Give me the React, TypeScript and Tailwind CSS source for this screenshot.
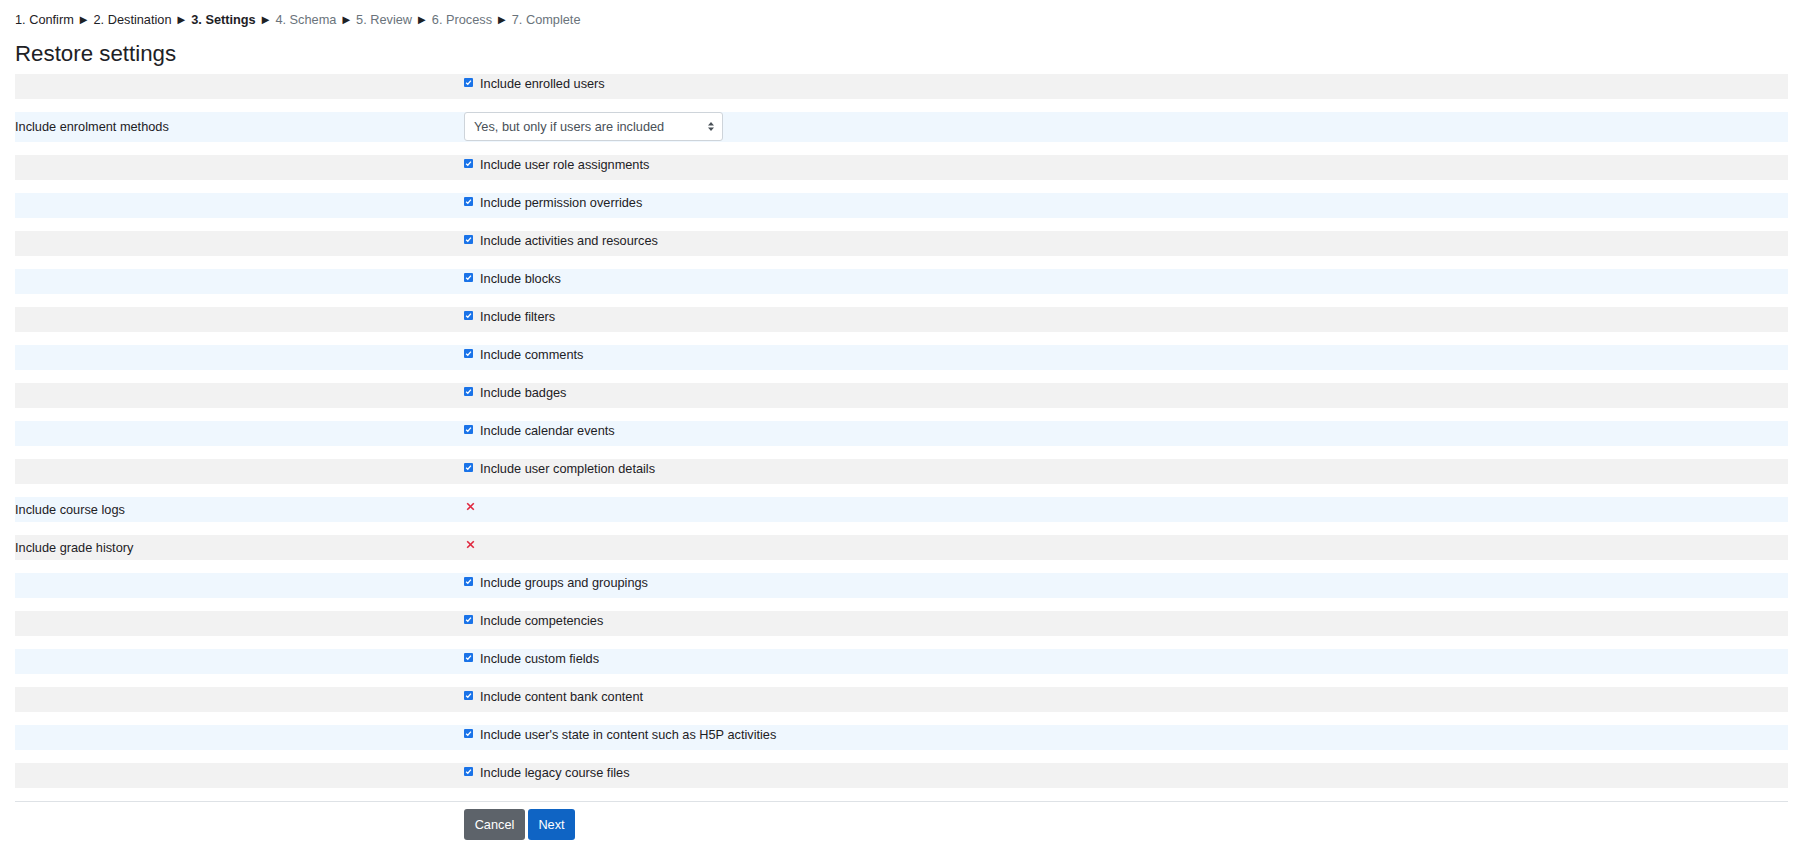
import React from 'react';

type Row =
    | { kind: 'check'; text: string }
    | { kind: 'select'; label: string; value: string }
    | { kind: 'locked'; label: string };

const rows: Row[] = [
    { kind: 'check', text: 'Include enrolled users' },
    { kind: 'select', label: 'Include enrolment methods', value: 'Yes, but only if users are included' },
    { kind: 'check', text: 'Include user role assignments' },
    { kind: 'check', text: 'Include permission overrides' },
    { kind: 'check', text: 'Include activities and resources' },
    { kind: 'check', text: 'Include blocks' },
    { kind: 'check', text: 'Include filters' },
    { kind: 'check', text: 'Include comments' },
    { kind: 'check', text: 'Include badges' },
    { kind: 'check', text: 'Include calendar events' },
    { kind: 'check', text: 'Include user completion details' },
    { kind: 'locked', label: 'Include course logs' },
    { kind: 'locked', label: 'Include grade history' },
    { kind: 'check', text: 'Include groups and groupings' },
    { kind: 'check', text: 'Include competencies' },
    { kind: 'check', text: 'Include custom fields' },
    { kind: 'check', text: 'Include content bank content' },
    { kind: 'check', text: "Include user's state in content such as H5P activities" },
    { kind: 'check', text: 'Include legacy course files' }
];

const steps = [
    { label: '1. Confirm', state: 'done' },
    { label: '2. Destination', state: 'done' },
    { label: '3. Settings', state: 'current' },
    { label: '4. Schema', state: 'todo' },
    { label: '5. Review', state: 'todo' },
    { label: '6. Process', state: 'todo' },
    { label: '7. Complete', state: 'todo' }
];

function CheckBox() {
    return (
        <span className="mt-[4px] flex h-[9px] w-[9px] shrink-0 items-center justify-center rounded-[1px] bg-[#1a73e8]">
            <svg width="7" height="7" viewBox="0 0 8 8" fill="none">
                <path d="M1.3 4.2 L3.2 6 L6.8 1.8" stroke="white" strokeWidth="1.5" />
            </svg>
        </span>
    );
}

function RedCross() {
    return (
        <svg width="9" height="9" viewBox="0 0 9 9" className="mt-[5px]">
            <path d="M1.2 1.2 L7.8 7.8 M7.8 1.2 L1.2 7.8" stroke="#e0283f" strokeWidth="1.6" />
        </svg>
    );
}

function SettingRow({ row, index }: { row: Row; index: number }) {
    const bg = index % 2 === 0 ? 'bg-[#f2f2f2]' : 'bg-[#eff7fe]';

    if (row.kind === 'select') {
        return (
            <div className={`mb-[13px] flex h-[30px] ${bg}`}>
                <div className="flex w-[449px] shrink-0 items-center">{row.label}</div>
                <div className="flex h-[29px] w-[259px] items-center justify-between rounded-[3px] border border-[#ced4da] bg-white pl-[9px] pr-[8px] text-[#495057]">
                    <span>{row.value}</span>
                    <svg width="6" height="9" viewBox="0 0 6 9">
                        <path d="M3 0 L6 3.5 L0 3.5 Z M3 9 L0 5.5 L6 5.5 Z" fill="#495057" />
                    </svg>
                </div>
            </div>
        );
    }

    if (row.kind === 'locked') {
        return (
            <div className={`mb-[13px] flex h-[25px] ${bg}`}>
                <div className="w-[449px] shrink-0 pt-[3px]">{row.label}</div>
                <div className="pl-[2px]">
                    <RedCross />
                </div>
            </div>
        );
    }

    return (
        <div className={`mb-[13px] flex h-[25px] ${bg}`}>
            <div className="w-[449px] shrink-0" />
            <div className="flex items-start gap-[7px]">
                <CheckBox />
                <span>{row.text}</span>
            </div>
        </div>
    );
}

export default function App() {
    return (
        <div className="min-h-screen bg-white pl-[15px] pr-[12px] text-[12.75px] leading-[19px] text-[#1d2125] [font-family:'Liberation_Sans',Arial,sans-serif]">
            <div className="pt-[10px]">
                {steps.map((step, i) => (
                    <React.Fragment key={step.label}>
                        <span
                            className={
                                step.state === 'current'
                                    ? 'font-bold'
                                    : step.state === 'todo'
                                      ? 'text-[#6a737b]'
                                      : ''
                            }
                        >
                            {step.label}
                        </span>
                        {i < steps.length - 1 ? <span className="text-[#1d2125]"> ► </span> : null}
                    </React.Fragment>
                ))}
            </div>

            <h2 className="mt-[11px] mb-[6.5px] text-[22.3px] leading-[27px]">Restore settings</h2>

            <div>
                {rows.map((row, i) => (
                    <SettingRow key={i} row={row} index={i} />
                ))}
            </div>

            <div className="border-t border-[#dee2e6] pt-[7px]">
                <div className="flex gap-[3px] pl-[449px]">
                    <button className="h-[31px] w-[61px] rounded-[3px] bg-[#5d636a] text-white">Cancel</button>
                    <button className="h-[31px] w-[47px] rounded-[3px] bg-[#0f64c4] text-white">Next</button>
                </div>
            </div>
        </div>
    );
}
